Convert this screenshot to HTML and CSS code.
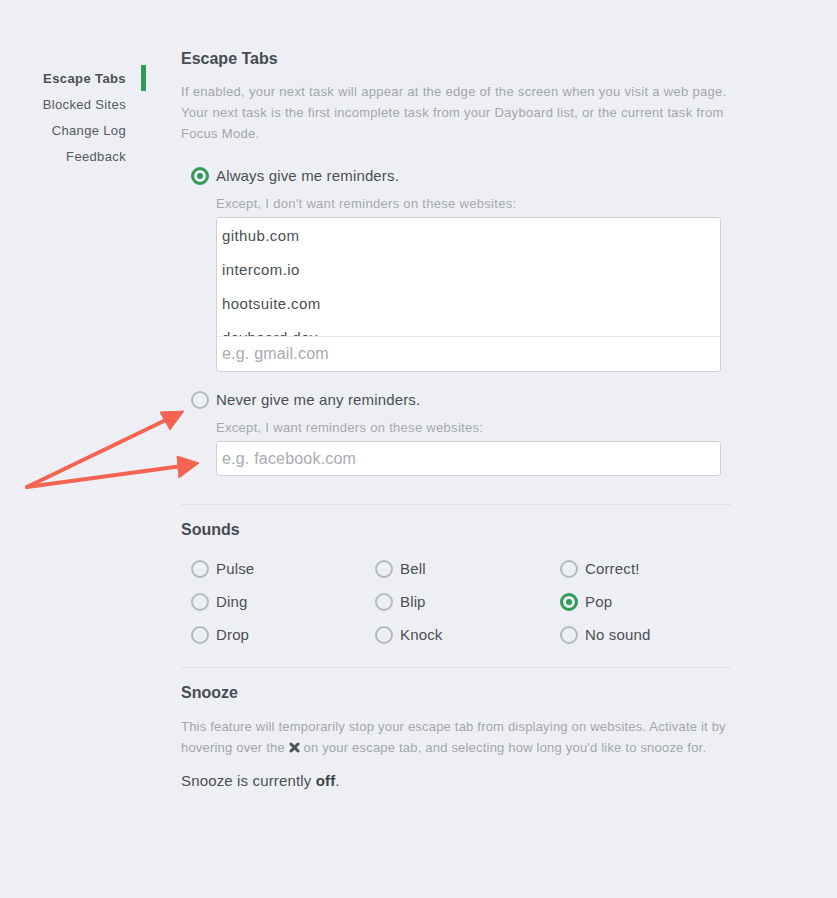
FILE: index.html
```html
<!DOCTYPE html>
<html>
<head>
<meta charset="utf-8">
<link rel="stylesheet" href="styles.css">
</head>
<body>
<div class="page">
  <nav class="sidebar">
    <a class="nav-item active">Escape Tabs</a>
    <a class="nav-item">Blocked Sites</a>
    <a class="nav-item">Change Log</a>
    <a class="nav-item">Feedback</a>
  </nav>
  <main class="content">
    <h2 class="heading first">Escape Tabs</h2>
    <p class="desc">If enabled, your next task will appear at the edge of the screen when you visit a web page. Your next task is the first incomplete task from your Dayboard list, or the current task from Focus Mode.</p>

    <label class="radio-row mode first-mode"><span class="radio checked"></span><span>Always give me reminders.</span></label>
    <div class="sub-label">Except, I don't want reminders on these websites:</div>
    <div class="site-box">
      <ul class="site-list">
        <li>github.com</li>
        <li>intercom.io</li>
        <li>hootsuite.com</li>
        <li>dayboard.dev</li>
      </ul>
      <div class="box-input">e.g. gmail.com</div>
    </div>

    <label class="radio-row mode second-mode"><span class="radio"></span><span>Never give me any reminders.</span></label>
    <div class="sub-label">Except, I want reminders on these websites:</div>
    <div class="text-input">e.g. facebook.com</div>

    <hr class="divider first-divider">

    <h2 class="heading">Sounds</h2>
    <div class="sounds">
      <label class="radio-row"><span class="radio"></span><span>Pulse</span></label>
      <label class="radio-row"><span class="radio"></span><span>Bell</span></label>
      <label class="radio-row"><span class="radio"></span><span>Correct!</span></label>
      <label class="radio-row"><span class="radio"></span><span>Ding</span></label>
      <label class="radio-row"><span class="radio"></span><span>Blip</span></label>
      <label class="radio-row"><span class="radio checked"></span><span>Pop</span></label>
      <label class="radio-row"><span class="radio"></span><span>Drop</span></label>
      <label class="radio-row"><span class="radio"></span><span>Knock</span></label>
      <label class="radio-row"><span class="radio"></span><span>No sound</span></label>
    </div>

    <hr class="divider second-divider">

    <h2 class="heading">Snooze</h2>
    <p class="desc snooze-desc">This feature will temporarily stop your escape tab from displaying on websites. Activate it by hovering over the <svg class="x-icon" width="11" height="11" viewBox="0 0 11 11"><path d="M2 2 L9 9 M9 2 L2 9" stroke="#4d5258" stroke-width="3" stroke-linecap="round"/></svg> on your escape tab, and selecting how long you'd like to snooze for.</p>
    <p class="status">Snooze is currently <b>off</b>.</p>
  </main>
</div>
<svg class="arrows" width="837" height="898" viewBox="0 0 837 898">
  <g fill="#f56352" stroke="#f56352">
    <line x1="27" y1="487" x2="168" y2="419" stroke-width="4" stroke-linecap="round"/>
    <polygon points="184,411 160,412 170,430" stroke-width="1" stroke-linejoin="round"/>
    <line x1="27" y1="487" x2="182" y2="466" stroke-width="4" stroke-linecap="round"/>
    <polygon points="199,463 177,456 179,478" stroke-width="1" stroke-linejoin="round"/>
  </g>
</svg>
</body>
</html>
```

FILE: styles.css
```css
html, body {
  margin: 0;
  padding: 0;
  background: #eeeff4;
}
body {
  font-family: "Liberation Sans", Arial, sans-serif;
  color: #4a4f55;
  width: 837px;
  height: 898px;
  overflow: hidden;
  position: relative;
}
.page {
  display: flex;
  align-items: flex-start;
}
.sidebar {
  width: 146px;
  padding-top: 65px;
  display: flex;
  flex-direction: column;
  align-items: stretch;
}
.nav-item {
  display: block;
  text-align: right;
  font-size: 13px;
  letter-spacing: 0.35px;
  line-height: 27px;
  height: 26px;
  padding-right: 20px;
  color: #555a61;
}
.nav-item.active {
  font-weight: bold;
  color: #4a4f55;
  padding-right: 15px;
  border-right: 5px solid #2f9b57;
  letter-spacing: 0.4px;
}
.content {
  margin-left: 35px;
  width: 550px;
  padding-top: 49px;
}
.heading {
  margin: 15px 0 0;
  font-size: 16px;
  line-height: 20px;
  font-weight: bold;
  color: #474c52;
}
.heading.first {
  margin-top: 0;
}
.desc {
  margin: 12px 0 0;
  font-size: 13px;
  letter-spacing: 0.3px;
  line-height: 21px;
  color: #a3a6ab;
}
.snooze-desc {
  margin-top: 13px;
  letter-spacing: 0.2px;
}
.x-icon {
  display: inline-block;
  vertical-align: -1px;
  height: 11px;
}
.radio-row {
  display: flex;
  align-items: center;
  gap: 7px;
  font-size: 15px;
  letter-spacing: 0.15px;
  line-height: 24px;
  height: 24px;
  color: #4a4f55;
}
.mode {
  margin-left: 10px;
}
.first-mode {
  margin-top: 20px;
}
.second-mode {
  margin-top: 16px;
}
.radio {
  box-sizing: border-box;
  width: 18px;
  height: 18px;
  border-radius: 50%;
  border: 2.5px solid #b1bbba;
  background: transparent;
  flex: none;
  position: relative;
}
.radio.checked {
  border: 3px solid #2f9b57;
}
.radio.checked::after {
  content: "";
  position: absolute;
  left: 3px;
  top: 3px;
  width: 6px;
  height: 6px;
  border-radius: 50%;
  background: #2f9b57;
}
.sub-label {
  margin: 7px 0 0 35px;
  font-size: 13px;
  letter-spacing: 0.3px;
  line-height: 18px;
  color: #a6a9ae;
}
.site-box {
  margin: 4px 0 0 35px;
  width: 505px;
  height: 155px;
  box-sizing: border-box;
  border: 1px solid #cfd0d4;
  border-radius: 3px;
  background: #fff;
  display: flex;
  flex-direction: column;
}
.site-list {
  list-style: none;
  margin: 0;
  padding: 1px 0 0 5px;
  height: 119px;
  overflow: hidden;
  font-size: 15px;
  letter-spacing: 0.4px;
  color: #4a4f55;
}
.site-list li {
  line-height: 34px;
  height: 34px;
}
.box-input {
  border-top: 1px solid #e6e7ea;
  flex: 1;
  padding-left: 5px;
  font-size: 16px;
  letter-spacing: 0.2px;
  line-height: 34px;
  color: #a9abb0;
}
.text-input {
  margin: 4px 0 0 35px;
  width: 505px;
  height: 35px;
  box-sizing: border-box;
  border: 1px solid #cfd0d4;
  border-radius: 3px;
  background: #fff;
  padding-left: 5px;
  font-size: 16px;
  letter-spacing: 0.2px;
  line-height: 33px;
  color: #a9abb0;
}
.divider {
  border: 0;
  border-top: 1px solid #dfe0e5;
  margin: 0;
  height: 0;
}
.first-divider {
  margin-top: 28px;
}
.second-divider {
  margin-top: 16px;
}
.sounds {
  margin-top: 12px;
  padding-left: 10px;
  display: grid;
  grid-template-columns: 184px 185px 1fr;
}
.sounds .radio-row {
  height: 33px;
  line-height: 33px;
}
.status {
  margin: 13px 0 0;
  font-size: 15px;
  letter-spacing: 0.15px;
  line-height: 20px;
  color: #4a4f55;
}
.status b {
  color: #3f444a;
}
.arrows {
  position: absolute;
  left: 0;
  top: 0;
  pointer-events: none;
}
```
